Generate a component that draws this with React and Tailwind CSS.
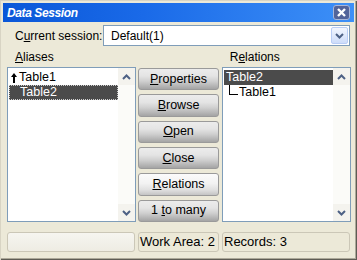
import React from "react";

const F = "font-['Liberation_Sans_Narrow','Liberation_Sans',sans-serif]";

function Chevron({ up }) {
  return (
    <svg width="9" height="6" viewBox="0 0 9 6">
      <path
        d={up ? "M1 5 L4.5 1.5 L8 5" : "M1 1 L4.5 4.5 L8 1"}
        fill="none"
        stroke="#4d6185"
        strokeWidth="2"
      />
    </svg>
  );
}

function ScrollBar() {
  return (
    <div className="w-[17px] h-full flex flex-col justify-between bg-[#fbfbf8]">
      <div className="h-[17px] flex items-center justify-center bg-[#f4f3ee]">
        <Chevron up />
      </div>
      <div className="h-[17px] flex items-center justify-center bg-[#f4f3ee]">
        <Chevron />
      </div>
    </div>
  );
}

function Btn({ children, hot }) {
  return (
    <div
      className={
        "h-[23px] w-full rounded-[3px] border border-[#9a9a9a] flex items-center justify-center text-[12.5px] text-black " +
        (hot
          ? "bg-[linear-gradient(to_bottom,#fbfbfb_0%,#f2f2f2_45%,#e0e0e0_75%,#c4c4c4_100%)]"
          : "bg-[linear-gradient(to_bottom,#ececec_0%,#e4e4e4_35%,#d0d0d0_60%,#a4a4a4_100%)]")
      }
    >
      {children}
    </div>
  );
}

export default function App() {
  return (
    <div
      className={
        "w-[357px] h-[260px] bg-[#ece9d8] flex flex-col relative overflow-hidden " +
        F +
        " shadow-[inset_1px_1px_0_#d8d4c4,inset_-1px_-1px_0_#5e5c54,inset_-2px_-2px_0_#aca899]"
      }
    >
      {/* Title bar */}
      <div className="mx-[3px] mt-[3px] h-[19px] bg-[linear-gradient(to_right,#0a57d8,#1a6ae8_40%,#3d90f7)] flex items-center pl-[4px] pr-[4px]">
        <span className="text-white font-bold italic text-[12px] tracking-[-0.4px] font-['Liberation_Sans',sans-serif]">
          Data Session
        </span>
        <div className="ml-auto w-[17px] h-[15px] rounded-[3px] bg-[#52649a] border border-[#a9b6d6] flex items-center justify-center">
          <svg width="9" height="9" viewBox="0 0 9 9">
            <path d="M1 1 L8 8 M8 1 L1 8" stroke="white" strokeWidth="2.4" />
          </svg>
        </div>
      </div>

      {/* Current session row */}
      <div className="mt-[3px] h-[21px] flex items-center pl-[15px] pr-[7px]">
        <span className="text-[12px] text-black">
          C<span className="underline">u</span>rrent session:
        </span>
        <div className="ml-auto w-[247px] h-[21px] border border-[#7f9db9] bg-white flex items-center">
          <span className="pl-[7px] text-[12px] text-black">Default(1)</span>
          <div className="ml-auto mr-[1px] w-[17px] h-[17px] rounded-[2px] border border-[#b9cdf5] bg-[linear-gradient(to_bottom,#f2f6fe,#cddcf9)] flex items-center justify-center">
            <Chevron />
          </div>
        </div>
      </div>

      {/* Labels */}
      <div className="h-[21px] flex items-end pb-[1px] text-[12px] text-black">
        <span className="ml-[15px]">
          <span className="underline">A</span>liases
        </span>
        <span className="ml-[176px]">
          R<span className="underline">e</span>lations
        </span>
      </div>

      {/* Main row */}
      <div className="flex pl-[7px] pr-[6px] h-[155px]">
        {/* left list */}
        <div className="w-[129px] h-full border border-[#7f9db9] bg-white flex">
          <div className="flex-1 pt-[2px] pl-[1px]">
            <div className="h-[15px] flex items-center pl-[2px] text-[12.5px] text-black">
              <svg width="6" height="10" viewBox="0 0 6 10" className="mr-[2px]">
                <path d="M3 0 L6 4 L4 4 L4 10 L2 10 L2 4 L0 4 Z" fill="black" />
              </svg>
              Table1
            </div>
            <div className="h-[15px] flex items-center pl-[10px] text-[12.5px] text-white bg-[#4b4b4b] border border-dotted border-[#cfcfcf]">
              Table2
            </div>
          </div>
          <ScrollBar />
        </div>

        {/* buttons */}
        <div className="w-[81px] ml-[2px] pt-[1px] flex flex-col gap-[4px]">
          <Btn><span><span className="underline">P</span>roperties</span></Btn>
          <Btn><span><span className="underline">B</span>rowse</span></Btn>
          <Btn><span><span className="underline">O</span>pen</span></Btn>
          <Btn><span><span className="underline">C</span>lose</span></Btn>
          <Btn hot><span><span className="underline">R</span>elations</span></Btn>
          <Btn><span>1 <span className="underline">t</span>o many</span></Btn>
        </div>

        {/* right list */}
        <div className="w-[129px] ml-[3px] h-full border border-[#7f9db9] bg-white flex">
          <div className="flex-1 pt-[2px] pl-[1px]">
            <div className="h-[15px] flex items-center pl-[2px] text-[12.5px] text-white bg-[#4b4b4b]">
              Table2
            </div>
            <div className="h-[14px] flex items-center text-[12.5px] text-black">
              <div className="ml-[5px] w-[9px] h-[10px] mb-[5px] border-l border-b border-black" />
              <span className="ml-[1px]">Table1</span>
            </div>
          </div>
          <ScrollBar />
        </div>
      </div>

      {/* Status bar */}
      <div className="mt-[10px] h-[20px] flex pl-[7px] pr-[7px] text-[13px] text-black">
        <div className="w-[128px] h-full rounded-[3px] border border-[#cbc7b7] bg-[linear-gradient(to_bottom,#f6f5f0,#eeece3)]" />
        <div className="w-[81px] ml-[3px] h-full rounded-[3px] border border-[#cbc7b7] flex items-center pl-[1px]">
          Work Area: 2
        </div>
        <div className="w-[128px] ml-[3px] h-full rounded-[3px] border border-[#cbc7b7] flex items-center pl-[1px]">
          Records: 3
        </div>
      </div>
    </div>
  );
}
